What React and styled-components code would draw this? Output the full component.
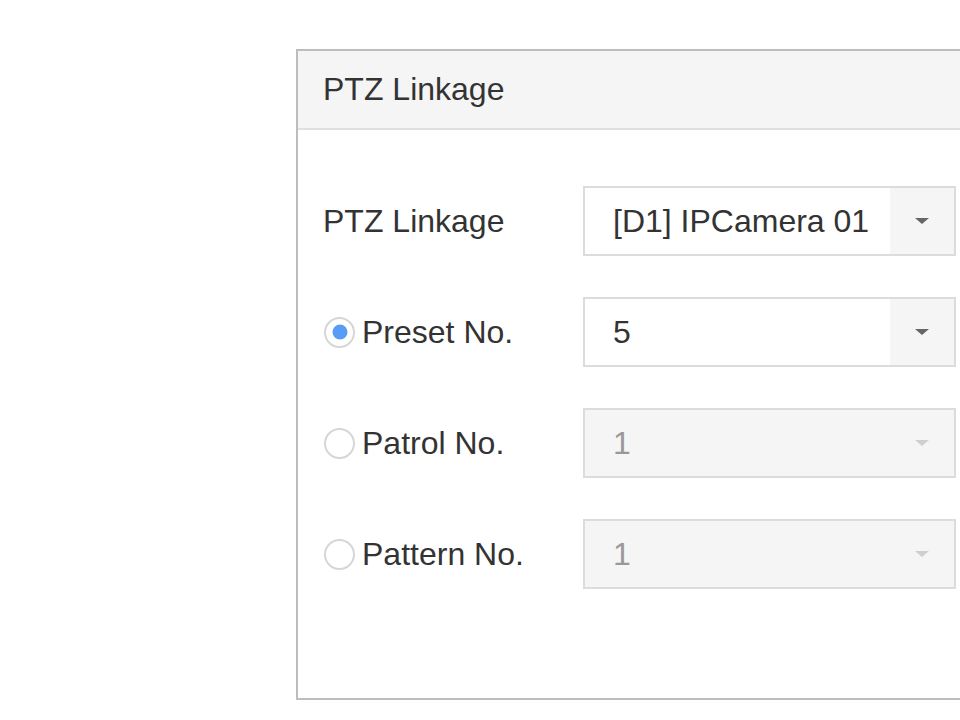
import React from 'react';
import styled, { createGlobalStyle } from 'styled-components';

const GlobalStyle = createGlobalStyle`
  html, body {
    margin: 0;
    padding: 0;
    background: #fff;
    overflow: hidden;
  }
  body {
    font-family: "Liberation Sans", Arial, sans-serif;
    color: #333;
  }
`;

const rows = [
  { label: 'PTZ Linkage', value: '[D1] IPCamera 01' },
  { label: 'Preset No.', value: '5', radio: true, checked: true },
  { label: 'Patrol No.', value: '1', radio: true, disabled: true },
  { label: 'Pattern No.', value: '1', radio: true, disabled: true },
];

const App = () => {
  return (
    <>
      <GlobalStyle />
      <Page>
        <Panel>
          <PanelHeader>PTZ Linkage</PanelHeader>
          <PanelBody>
            {rows.map((row) => (
              <Row key={row.label}>
                <Label>
                  {row.radio && <Radio checked={row.checked} />}
                  <LabelText>{row.label}</LabelText>
                </Label>
                <Select disabled={row.disabled}>
                  <SelectValue>{row.value}</SelectValue>
                  <ArrowBox>
                    <Arrow />
                  </ArrowBox>
                </Select>
              </Row>
            ))}
          </PanelBody>
        </Panel>
      </Page>
    </>
  );
};

export default App;

const Page = styled.div`
  width: 960px;
  height: 720px;
  padding: 49px 0 0 296px;
  box-sizing: border-box;
  overflow: hidden;
`;

const Panel = styled.section`
  width: 720px;
  border: 2px solid #bdbdbd;
  background: #fff;
`;

const PanelHeader = styled.h2`
  margin: 0;
  height: 77px;
  padding-left: 25px;
  display: flex;
  align-items: center;
  background: #f5f5f5;
  border-bottom: 2px solid #e0e0e0;
  font-size: 32px;
  font-weight: normal;
  color: #333;
`;

const PanelBody = styled.div`
  padding: 56px 0 109px 0;
  display: flex;
  flex-direction: column;
  gap: 41px;
`;

const Row = styled.div`
  display: flex;
  align-items: center;
  height: 70px;
`;

const Label = styled.div`
  width: 285px;
  display: flex;
  align-items: center;
  padding-left: 25px;
  box-sizing: border-box;
`;

const LabelText = styled.span`
  font-size: 32px;
  color: #333;
`;

const Radio = styled.span`
  position: relative;
  width: 31px;
  height: 31px;
  margin-left: 1px;
  margin-right: 7px;
  border: 2px solid #d6d6d6;
  border-radius: 50%;
  box-sizing: border-box;
  background: #fff;

  &::after {
    content: '';
    display: ${(p) => (p.checked ? 'block' : 'none')};
    position: absolute;
    top: 50%;
    left: 50%;
    width: 15px;
    height: 15px;
    transform: translate(-50%, -50%);
    border-radius: 50%;
    background: #5b9bf8;
  }
`;

const Select = styled.div`
  width: 373px;
  height: 70px;
  box-sizing: border-box;
  border: 2px solid #dcdcdc;
  display: flex;
  align-items: center;
  background: ${(p) => (p.disabled ? '#f5f5f5' : '#fff')};
  color: ${(p) => (p.disabled ? '#999' : '#333')};
  --arrow: ${(p) => (p.disabled ? '#cfcfcf' : '#666')};
`;

const SelectValue = styled.span`
  flex: 1;
  padding-left: 28px;
  font-size: 32px;
`;

const ArrowBox = styled.span`
  width: 64px;
  height: 100%;
  display: flex;
  align-items: center;
  justify-content: center;
  background: #f5f5f5;
`;

const Arrow = styled.span`
  width: 0;
  height: 0;
  border-left: 7px solid transparent;
  border-right: 7px solid transparent;
  border-top: 6px solid var(--arrow);
`;
